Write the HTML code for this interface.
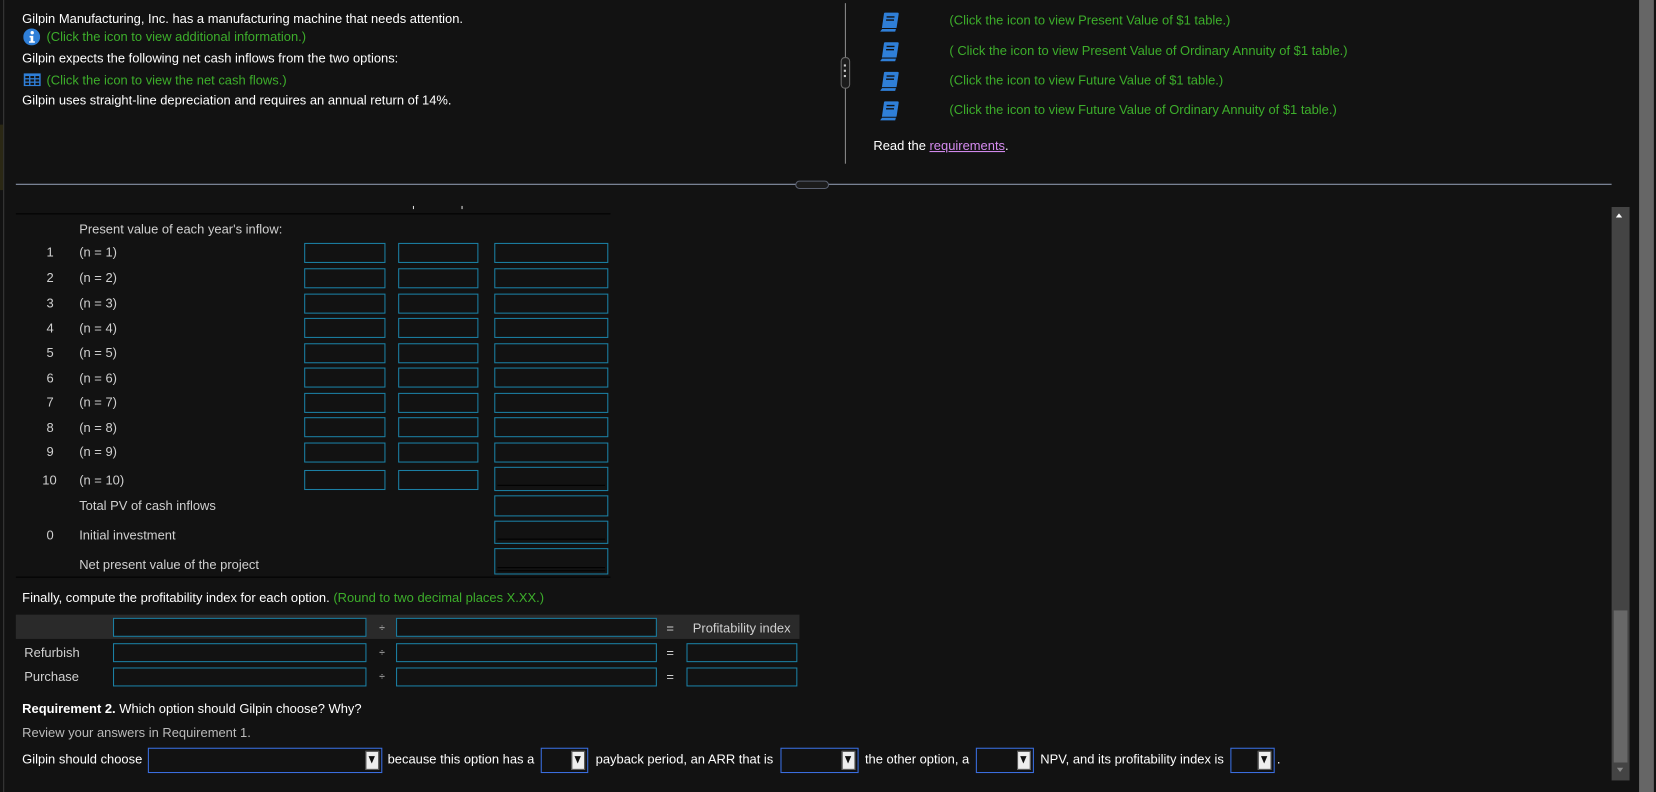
<!DOCTYPE html>
<html><head><meta charset="utf-8"><style>
html,body{margin:0;padding:0;background:#121212;overflow:hidden;width:1656px;height:792px}
#w{position:absolute;left:0;top:0;width:1568px;height:750px;transform:scale(1.0561);transform-origin:0 0;font-family:"Liberation Sans",Arial,sans-serif;font-size:12.25px;color:#fff}
.a{position:absolute;white-space:nowrap}
.t{position:absolute;white-space:nowrap;transform:translateY(-50%)}
.g{color:#3dae2b}
.l{color:#d0d0d0}
.in{position:absolute;box-sizing:border-box;border:1px solid #1b7fa3;background:#121212}
.dd{position:absolute;box-sizing:border-box;border:1px solid #3a6ee0;background:#121212}
.dd i{position:absolute;right:2px;top:2px;bottom:2px;width:11px;background:#eee;border:1px solid #555}
.dd i:after{content:"";position:absolute;left:2px;top:4px;border-left:3.5px solid transparent;border-right:3.5px solid transparent;border-top:7px solid #111}
</style></head><body><div id="w">
<div class="a" style="left:3px;top:0;width:1px;height:750px;background:#3a3a3a"></div>
<div class="a" style="left:0;top:118px;width:3px;height:62px;background:#2b2814"></div>

<div class="t" style="left:21px;top:18px">Gilpin Manufacturing, Inc. has a manufacturing machine that needs attention.</div>
<svg class="a" style="left:22px;top:27px" width="16" height="16" viewBox="0 0 16 16"><circle cx="8" cy="8" r="8" fill="#2f7fd8"/><circle cx="8.5" cy="4" r="1.6" fill="#fff"/><path d="M6 7h3.5v5H11v1.5H5.5V12H7V8.5H6z" fill="#fff"/></svg>
<div class="t g" style="left:44px;top:35px">(Click the icon to view additional information.)</div>
<div class="t" style="left:21px;top:55px">Gilpin expects the following net cash inflows from the two options:</div>
<svg class="a" style="left:22px;top:69px" width="17" height="13" viewBox="0 0 17 13"><rect x="0.5" y="0.5" width="16" height="12" fill="#2f7fd8"/><g fill="#121212"><rect x="2" y="3" width="3.5" height="2"/><rect x="6.8" y="3" width="3.5" height="2"/><rect x="11.6" y="3" width="3.5" height="2"/><rect x="2" y="6.2" width="3.5" height="2"/><rect x="6.8" y="6.2" width="3.5" height="2"/><rect x="11.6" y="6.2" width="3.5" height="2"/><rect x="2" y="9.4" width="3.5" height="2"/><rect x="6.8" y="9.4" width="3.5" height="2"/><rect x="11.6" y="9.4" width="3.5" height="2"/></g></svg>
<div class="t g" style="left:44px;top:76px">(Click the icon to view the net cash flows.)</div>
<div class="t" style="left:21px;top:95px">Gilpin uses straight-line depreciation and requires an annual return of 14%.</div>

<div class="a" style="left:800px;top:3px;width:1px;height:152px;background:#8a8a8a"></div>
<div class="a" style="left:796px;top:54px;width:7px;height:28px;border:1px solid #6a6a6a;border-radius:4px;background:#1c1c1c"></div>
<div class="a" style="left:799px;top:61px;width:2px;height:2px;background:#ccc;box-shadow:0 5px #ccc,0 10px #ccc"></div>

<svg class="a" style="left:832px;top:11px" width="20" height="21" viewBox="0 0 20 21"><path d="M5 2Q5 1 6 1h12q1 0 1 1l-2 13q0 1-1 1H3z" fill="#2f7fd8"/><path d="M3 16h14l-1 3.5H2q-1 0-1-1z" fill="#2f7fd8" stroke="#121212" stroke-width="1"/><path d="M7.5 5h7.5M7 8h7.5" stroke="#121212" stroke-width="1.3"/></svg>
<svg class="a" style="left:832px;top:39px" width="20" height="21" viewBox="0 0 20 21"><path d="M5 2Q5 1 6 1h12q1 0 1 1l-2 13q0 1-1 1H3z" fill="#2f7fd8"/><path d="M3 16h14l-1 3.5H2q-1 0-1-1z" fill="#2f7fd8" stroke="#121212" stroke-width="1"/><path d="M7.5 5h7.5M7 8h7.5" stroke="#121212" stroke-width="1.3"/></svg>
<svg class="a" style="left:832px;top:67px" width="20" height="21" viewBox="0 0 20 21"><path d="M5 2Q5 1 6 1h12q1 0 1 1l-2 13q0 1-1 1H3z" fill="#2f7fd8"/><path d="M3 16h14l-1 3.5H2q-1 0-1-1z" fill="#2f7fd8" stroke="#121212" stroke-width="1"/><path d="M7.5 5h7.5M7 8h7.5" stroke="#121212" stroke-width="1.3"/></svg>
<svg class="a" style="left:832px;top:95px" width="20" height="21" viewBox="0 0 20 21"><path d="M5 2Q5 1 6 1h12q1 0 1 1l-2 13q0 1-1 1H3z" fill="#2f7fd8"/><path d="M3 16h14l-1 3.5H2q-1 0-1-1z" fill="#2f7fd8" stroke="#121212" stroke-width="1"/><path d="M7.5 5h7.5M7 8h7.5" stroke="#121212" stroke-width="1.3"/></svg>
<div class="t g" style="left:899px;top:19px">(Click the icon to view Present Value of $1 table.)</div>
<div class="t g" style="left:899px;top:48px">( Click the icon to view Present Value of Ordinary Annuity of $1 table.)</div>
<div class="t g" style="left:899px;top:76px">(Click the icon to view Future Value of $1 table.)</div>
<div class="t g" style="left:899px;top:104px">(Click the icon to view Future Value of Ordinary Annuity of $1 table.)</div>
<div class="t" style="left:827px;top:138px">Read the <span style="color:#d58bf0;text-decoration:underline">requirements</span>.</div>

<div class="a" style="left:15px;top:174px;width:1511px;height:1px;background:#8f9ab0"></div>
<div class="a" style="left:753px;top:171px;width:30px;height:6px;border:1px solid #5a6070;border-radius:4px;background:#1c1c1c"></div>

<div class="a" style="left:1526px;top:196px;width:17px;height:543px;background:#444"></div>
<div class="a" style="left:1528px;top:578px;width:13px;height:144px;background:#686868"></div>
<div class="a" style="left:1530px;top:202px;border-left:3.5px solid transparent;border-right:3.5px solid transparent;border-bottom:4px solid #fff"></div>
<div class="a" style="left:1531px;top:727px;border-left:3px solid transparent;border-right:3px solid transparent;border-top:4px solid #888"></div>
<div class="a" style="left:1552px;top:0;width:14px;height:750px;background:#666"></div>

<div class="a" style="left:15px;top:202px;width:563px;height:1px;background:#000"></div>
<div class="a" style="left:391px;top:195px;width:1px;height:3px;background:#ddd"></div>
<div class="a" style="left:437px;top:195px;width:1px;height:3px;background:#ddd"></div>
<div class="t l" style="left:75px;top:217px">Present value of each year's inflow:</div>

<div class="t l" style="left:44px;top:239px">1</div><div class="t l" style="left:75px;top:239px">(n = 1)</div>
<div class="t l" style="left:44px;top:263px">2</div><div class="t l" style="left:75px;top:263px">(n = 2)</div>
<div class="t l" style="left:44px;top:287px">3</div><div class="t l" style="left:75px;top:287px">(n = 3)</div>
<div class="t l" style="left:44px;top:311px">4</div><div class="t l" style="left:75px;top:311px">(n = 4)</div>
<div class="t l" style="left:44px;top:334px">5</div><div class="t l" style="left:75px;top:334px">(n = 5)</div>
<div class="t l" style="left:44px;top:358px">6</div><div class="t l" style="left:75px;top:358px">(n = 6)</div>
<div class="t l" style="left:44px;top:381px">7</div><div class="t l" style="left:75px;top:381px">(n = 7)</div>
<div class="t l" style="left:44px;top:405px">8</div><div class="t l" style="left:75px;top:405px">(n = 8)</div>
<div class="t l" style="left:44px;top:428px">9</div><div class="t l" style="left:75px;top:428px">(n = 9)</div>
<div class="t l" style="left:40px;top:455px">10</div><div class="t l" style="left:75px;top:455px">(n = 10)</div>
<div class="t l" style="left:75px;top:479px">Total PV of cash inflows</div>
<div class="t l" style="left:44px;top:507px">0</div><div class="t l" style="left:75px;top:507px">Initial investment</div>
<div class="t l" style="left:75px;top:535px">Net present value of the project</div>

<div class="in" style="left:288px;top:230px;width:77px;height:19px"></div><div class="in" style="left:377px;top:230px;width:76px;height:19px"></div><div class="in" style="left:468px;top:230px;width:108px;height:19px"></div>
<div class="in" style="left:288px;top:254px;width:77px;height:19px"></div><div class="in" style="left:377px;top:254px;width:76px;height:19px"></div><div class="in" style="left:468px;top:254px;width:108px;height:19px"></div>
<div class="in" style="left:288px;top:278px;width:77px;height:19px"></div><div class="in" style="left:377px;top:278px;width:76px;height:19px"></div><div class="in" style="left:468px;top:278px;width:108px;height:19px"></div>
<div class="in" style="left:288px;top:301px;width:77px;height:19px"></div><div class="in" style="left:377px;top:301px;width:76px;height:19px"></div><div class="in" style="left:468px;top:301px;width:108px;height:19px"></div>
<div class="in" style="left:288px;top:325px;width:77px;height:19px"></div><div class="in" style="left:377px;top:325px;width:76px;height:19px"></div><div class="in" style="left:468px;top:325px;width:108px;height:19px"></div>
<div class="in" style="left:288px;top:348px;width:77px;height:19px"></div><div class="in" style="left:377px;top:348px;width:76px;height:19px"></div><div class="in" style="left:468px;top:348px;width:108px;height:19px"></div>
<div class="in" style="left:288px;top:372px;width:77px;height:19px"></div><div class="in" style="left:377px;top:372px;width:76px;height:19px"></div><div class="in" style="left:468px;top:372px;width:108px;height:19px"></div>
<div class="in" style="left:288px;top:395px;width:77px;height:19px"></div><div class="in" style="left:377px;top:395px;width:76px;height:19px"></div><div class="in" style="left:468px;top:395px;width:108px;height:19px"></div>
<div class="in" style="left:288px;top:419px;width:77px;height:19px"></div><div class="in" style="left:377px;top:419px;width:76px;height:19px"></div><div class="in" style="left:468px;top:419px;width:108px;height:19px"></div>
<div class="in" style="left:288px;top:445px;width:77px;height:19px"></div><div class="in" style="left:377px;top:445px;width:76px;height:19px"></div><div class="in" style="left:468px;top:442px;width:108px;height:23px"><div class="a" style="left:2px;right:2px;top:16px;height:1px;background:#000"></div></div>
<div class="in" style="left:468px;top:469px;width:108px;height:20px"></div>
<div class="in" style="left:468px;top:493px;width:108px;height:22px"><div class="a" style="left:2px;right:2px;top:16px;height:1px;background:#000"></div></div>
<div class="in" style="left:468px;top:519px;width:108px;height:25px"><div class="a" style="left:2px;right:2px;top:17px;height:1px;background:#000"></div><div class="a" style="left:2px;right:2px;top:20px;height:1px;background:#000"></div></div>
<div class="a" style="left:15px;top:546px;width:563px;height:1px;background:#000"></div>

<div class="t" style="left:21px;top:566px">Finally, compute the profitability index for each option. <span class="g">(Round to two decimal places X.XX.)</span></div>
<div class="a" style="left:15px;top:582px;width:742px;height:23px;background:#2a2a2a"></div>
<div class="in" style="left:107px;top:585px;width:240px;height:18px"></div>
<div class="t l" style="left:359px;top:595px;font-size:10px">÷</div>
<div class="in" style="left:375px;top:585px;width:247px;height:18px"></div>
<div class="t l" style="left:631px;top:595px">=</div>
<div class="t l" style="left:656px;top:595px">Profitability index</div>

<div class="t l" style="left:23px;top:618px">Refurbish</div>
<div class="in" style="left:107px;top:609px;width:240px;height:18px"></div>
<div class="t l" style="left:359px;top:618px;font-size:10px">÷</div>
<div class="in" style="left:375px;top:609px;width:247px;height:18px"></div>
<div class="t l" style="left:631px;top:618px">=</div>
<div class="in" style="left:650px;top:609px;width:105px;height:18px"></div>

<div class="t l" style="left:23px;top:641px">Purchase</div>
<div class="in" style="left:107px;top:632px;width:240px;height:18px"></div>
<div class="t l" style="left:359px;top:641px;font-size:10px">÷</div>
<div class="in" style="left:375px;top:632px;width:247px;height:18px"></div>
<div class="t l" style="left:631px;top:641px">=</div>
<div class="in" style="left:650px;top:632px;width:105px;height:18px"></div>

<div class="t" style="left:21px;top:671px"><b>Requirement 2.</b> Which option should Gilpin choose? Why?</div>
<div class="t" style="left:21px;top:694px;color:#bbb">Review your answers in Requirement 1.</div>

<div class="t" style="left:21px;top:719px">Gilpin should choose</div>
<div class="dd" style="left:140px;top:708px;width:222px;height:24px"><i></i></div>
<div class="t" style="left:367px;top:719px">because this option has a</div>
<div class="dd" style="left:512px;top:708px;width:45px;height:24px"><i></i></div>
<div class="t" style="left:564px;top:719px">payback period, an ARR that is</div>
<div class="dd" style="left:739px;top:708px;width:74px;height:24px"><i></i></div>
<div class="t" style="left:819px;top:719px">the other option, a</div>
<div class="dd" style="left:924px;top:708px;width:55px;height:24px"><i></i></div>
<div class="t" style="left:985px;top:719px">NPV, and its profitability index is</div>
<div class="dd" style="left:1165px;top:708px;width:42px;height:24px"><i></i></div>
<div class="t" style="left:1209px;top:719px">.</div>
</div></body></html>
